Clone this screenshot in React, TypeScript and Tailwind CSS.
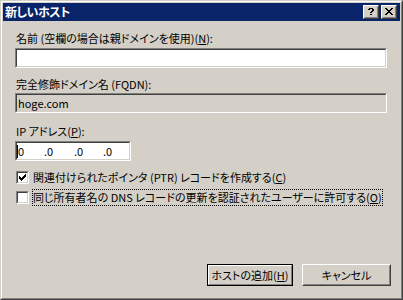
import React from "react";

function Sunken({ className = "", inner = "bg-white", children }: { className?: string; inner?: string; children?: React.ReactNode }) {
  return (
    <div className={`border border-t-[#808080] border-l-[#808080] border-r-white border-b-white ${className}`}>
      <div className={`h-full w-full border border-t-[#404040] border-l-[#404040] border-r-[#d4d0c8] border-b-[#d4d0c8] ${inner}`}>
        {children}
      </div>
    </div>
  );
}

function Pixels({ w, h, pts }: { w: number; h: number; pts: [number, number, number][] }) {
  return (
    <svg width={w} height={h} viewBox={`0 0 ${w} ${h}`} shapeRendering="crispEdges" className="block">
      {pts.map(([x, y, len], i) => (
        <rect key={i} x={x} y={y} width={len} height={1} fill="#000" />
      ))}
    </svg>
  );
}

function CapBtn({ children }: { children: React.ReactNode }) {
  return (
    <div className="w-[16px] h-[14px] border border-t-white border-l-white border-r-[#404040] border-b-[#404040]">
      <div className="w-full h-full border border-t-[#d4d0c8] border-l-[#d4d0c8] border-r-[#808080] border-b-[#808080] bg-[#d4d0c8]">
        {children}
      </div>
    </div>
  );
}

function Checkbox({ checked }: { checked: boolean }) {
  const pts: [number, number][] = [];
  if (checked) {
    const starts = [2, 3, 4, 3, 2, 1, 0];
    starts.forEach((s, c) => {
      for (let r = s; r < s + 3; r++) pts.push([1 + c, 1 + r]);
    });
  }
  return (
    <Sunken className="w-[13px] h-[13px] shrink-0">
      {checked && (
        <svg width={9} height={9} viewBox="0 0 9 9" shapeRendering="crispEdges" className="block">
          {pts.map(([x, y], i) => (
            <rect key={i} x={x} y={y} width={1} height={1} fill="#000" />
          ))}
        </svg>
      )}
    </Sunken>
  );
}

function U({ children }: { children: React.ReactNode }) {
  return <span className="underline underline-offset-[1px]">{children}</span>;
}

export default function App() {
  const xGlyph: [number, number, number][] = [
    [0, 0, 2], [6, 0, 2],
    [1, 1, 2], [5, 1, 2],
    [2, 2, 4],
    [3, 3, 2],
    [2, 4, 4],
    [1, 5, 2], [5, 5, 2],
    [0, 6, 2], [6, 6, 2],
  ];
  const qGlyph: [number, number, number][] = [
    [1, 0, 4],
    [0, 1, 2], [4, 1, 2],
    [4, 2, 2],
    [3, 3, 2],
    [2, 4, 2],
    [2, 6, 2],
  ];
  return (
    <div className="w-[403px] h-[300px] border border-t-[#d4d0c8] border-l-[#d4d0c8] border-r-[#404040] border-b-[#404040] font-['Noto_Sans_CJK_JP','Noto_Sans',sans-serif] text-[11px] leading-[13px] text-black [font-feature-settings:'palt']">
      <div className="w-full h-full border border-t-white border-l-white border-r-[#808080] border-b-[#808080] bg-[#d4d0c8] p-px flex flex-col">
        {/* Title bar */}
        <div className="h-[18px] shrink-0 bg-[#0a246a] flex items-center pl-[2px] pr-[3px]">
          <span className="flex-1 text-white font-bold text-[12px] tracking-[-0.5px] leading-[18px]">新しいホスト</span>
          <div className="flex gap-[2px]">
            <CapBtn>
              <div className="pl-[3px] pt-[1px]">
                <Pixels w={6} h={7} pts={qGlyph} />
              </div>
            </CapBtn>
            <CapBtn>
              <div className="pl-[2px] pt-[1px]">
                <Pixels w={8} h={7} pts={xGlyph} />
              </div>
            </CapBtn>
          </div>
        </div>

        {/* Client */}
        <div className="flex-1 flex flex-col pl-[12px] pr-[9px]">
          <div className="mt-[11px] h-[13px] pl-[1px] whitespace-nowrap">
            名前 (空欄の場合は親ドメインを使用)(<U>N</U>):
          </div>
          <Sunken className="mt-[3px] w-[372px] h-[20px]" />

          <div className="mt-[10px] h-[13px] pl-[1px] whitespace-nowrap">完全修飾ドメイン名 (FQDN):</div>
          <Sunken className="mt-[2px] w-[372px] h-[20px]" inner="bg-[#d4d0c8]">
            <div className="h-full flex items-center pl-[1px]">hoge.com</div>
          </Sunken>

          <div className="mt-[12px] h-[13px] pl-[1px] whitespace-nowrap">
            IP アドレス(<U>P</U>):
          </div>
          <Sunken className="mt-[3px] w-[116px] h-[20px]">
            <div className="h-full flex items-center">
              <span className="w-px h-[13px] bg-black shrink-0" />
              <span className="w-[26px]">0</span>
              <span className="w-[30px]">.0</span>
              <span className="w-[29px]">.0</span>
              <span>.0</span>
            </div>
          </Sunken>

          <div className="mt-[8px] h-[17px] flex items-center pl-[1px]">
            <Checkbox checked />
            <span className="ml-[3px] h-[17px] border border-transparent leading-[15px] whitespace-nowrap">
              関連付けられたポインタ (PTR) レコードを作成する(<U>C</U>)
            </span>
          </div>
          <div className="mt-[3px] h-[17px] flex items-center pl-[1px]">
            <Checkbox checked={false} />
            <span className="ml-[3px] h-[17px] border border-dotted border-black leading-[15px] whitespace-nowrap">
              同じ所有者名の DNS レコードの更新を認証されたユーザーに許可する(<U>O</U>)
            </span>
          </div>

          <div className="flex-1" />

          <div className="mb-[11px] flex justify-end gap-[9px]">
            <div className="w-[86px] h-[22px] border border-black">
              <div className="w-full h-full border border-t-white border-l-white border-r-[#808080] border-b-[#808080] flex items-center justify-center whitespace-nowrap">
                ホストの追加(<U>H</U>)
              </div>
            </div>
            <div className="w-[89px] h-[22px] border border-t-white border-l-white border-r-[#404040] border-b-[#404040]">
              <div className="w-full h-full border border-t-[#d4d0c8] border-l-[#d4d0c8] border-r-[#808080] border-b-[#808080] flex items-center justify-center whitespace-nowrap">
                キャンセル
              </div>
            </div>
          </div>
        </div>
      </div>
    </div>
  );
}
